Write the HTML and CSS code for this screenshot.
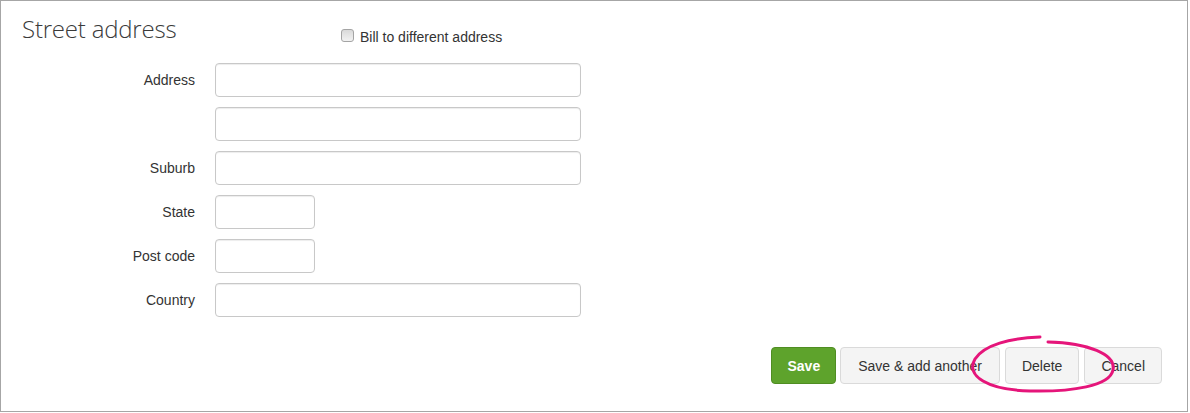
FILE: index.html
```html
<!DOCTYPE html>
<html>
<head>
<meta charset="utf-8">
<link rel="stylesheet" href="styles.css">
</head>
<body>
<div class="panel">
  <div class="header">
    <h2 class="title">Street address</h2>
    <label class="check"><input type="checkbox" class="cb"> Bill to different address</label>
  </div>
  <div class="form">
    <label class="lbl">Address</label><input class="inp wide" type="text">
    <span class="lbl"></span><input class="inp wide" type="text">
    <label class="lbl">Suburb</label><input class="inp wide" type="text">
    <label class="lbl">State</label><input class="inp small" type="text">
    <label class="lbl">Post code</label><input class="inp small" type="text">
    <label class="lbl">Country</label><input class="inp wide" type="text">
  </div>
  <div class="actions">
    <button class="btn primary">Save</button>
    <button class="btn another">Save &amp; add another</button>
    <button class="btn del">Delete</button>
    <button class="btn cancel">Cancel</button>
  </div>
  <svg class="mark" width="1188" height="412" viewBox="0 0 1188 412">
    <path d="M1040,337 C1010,338 984,345 975,359 C965,376 988,390 1030,391 C1072,392 1110,386 1113,370 C1116,354 1088,343 1048,342" fill="none" stroke="#e5157a" stroke-width="3" stroke-linecap="round"/>
  </svg>
</div>
</body>
</html>
```

FILE: styles.css
```css
* { box-sizing: border-box; }
html, body { margin: 0; padding: 0; background: #fff; }
body { font-family: "Liberation Sans", Arial, sans-serif; font-size: 14px; color: #333; }

.panel {
  position: relative;
  width: 1188px;
  height: 412px;
  border: 1px solid #a6a6a6;
  background: #fff;
}

.header {
  display: grid;
  grid-template-columns: 319px auto;
  padding-left: 21px;
  height: 62px;
}

.title {
  margin: 0;
  padding-top: 13px;
  font-family: "Open Sans", sans-serif;
  font-weight: 300;
  font-size: 24px;
  line-height: 30px;
  color: #3a3a3a;
  letter-spacing: -0.2px;
}

.check {
  display: flex;
  align-items: center;
  gap: 6px;
  padding-top: 36px;
  height: 14px;
  line-height: 14px;
  color: #333;
}

.cb {
  appearance: none;
  -webkit-appearance: none;
  margin: 0;
  width: 13px;
  height: 13px;
  border: 1px solid #a4a4a4;
  border-radius: 3px;
  background: linear-gradient(#d9d9d9, #f2f2f2);
  position: relative;
  top: -2px;
}

.form {
  display: grid;
  grid-template-columns: 194px 366px;
  column-gap: 20px;
  row-gap: 10px;
  align-items: center;
}

.lbl {
  text-align: right;
  color: #333;
  font-size: 14px;
}

.inp {
  height: 34px;
  border: 1px solid #c8c8c8;
  border-radius: 4px;
  box-shadow: inset 0 1px 1px rgba(0,0,0,0.075);
  font-family: inherit;
  font-size: 14px;
  padding: 6px 12px;
  background: #fff;
}
.inp.wide { width: 366px; }
.inp.small { width: 100px; }

.actions {
  display: flex;
  justify-content: flex-end;
  gap: 4px;
  padding-right: 25px;
  margin-top: 30px;
}

.btn {
  height: 37px;
  padding: 0 16px;
  border: 1px solid #dadada;
  border-radius: 4px;
  background: #f4f4f4;
  color: #333;
  font-family: "Liberation Sans", Arial, sans-serif;
  font-size: 14px;
}
.btn.primary {
  background: #5ea32c;
  border-color: #4f8d22;
  color: #fff;
  font-weight: bold;
  padding: 0 15px;
}
.btn.another { padding: 0 17px; }
.btn.del, .btn.cancel { margin-left: 1px; }

.mark {
  position: absolute;
  left: -1px;
  top: -1px;
  pointer-events: none;
}
```
